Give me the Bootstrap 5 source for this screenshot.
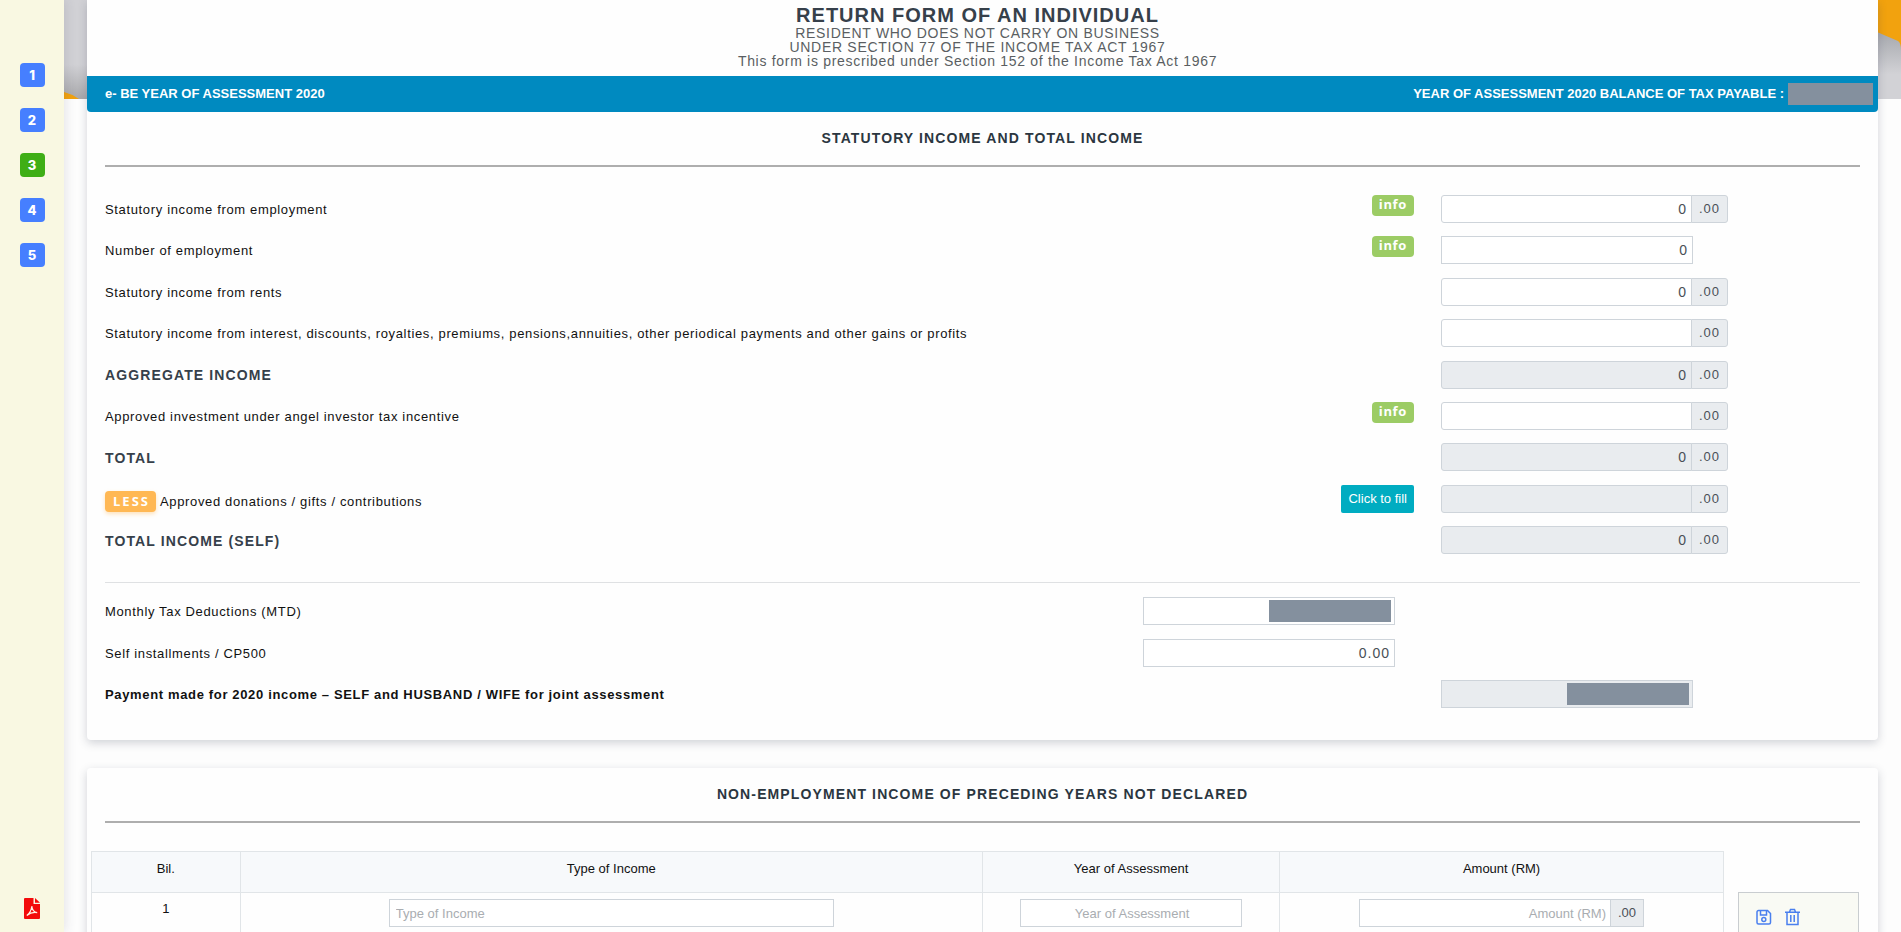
<!DOCTYPE html>
<html lang="en">
<head>
<meta charset="utf-8">
<meta name="viewport" content="width=device-width, initial-scale=1">
<title>e-BE Year of Assessment 2020</title>
<link href="https://cdn.jsdelivr.net/npm/bootstrap@5.3.0/dist/css/bootstrap.min.css" rel="stylesheet">
<style>
  body { font-family: "Liberation Sans", Arial, sans-serif; font-size: 13px; line-height: 20px; color: #111; background: #fdfdfd; }
  .side-rail { width: 64px; background: #f9f8e2; padding: 63px 0 9px; box-shadow: 2px 0 10px rgba(60,60,80,.12); z-index: 2; }
  .step-links { gap: 21px; }
  .step-link { width: 25px; height: 24px; border-radius: 4px; background: #467fff; color: #fff; font: 800 13px/24px Inter, sans-serif; text-align: center; text-decoration: none; }
  .step-link.current { background: #3fae15; }
  .backdrop { inset: 0 0 auto 0; height: 99px; z-index: 0; }
  .page-area { padding: 0 23px; }
  .form-sheet { background: #fefefe; border: 0; border-radius: 4px; box-shadow: 0 3px 10px rgba(50,60,80,.22); z-index: 1; }
  .sheet-top { border-radius: 0 0 4px 4px; margin-bottom: 28px; padding-bottom: 32px; }
  .form-head { padding: 5px 10px 8px 0; font-size: 14px; line-height: 14px; letter-spacing: .05em; color: #5a5e62; }
  .form-head h1 { font-size: 20px; line-height: 21px; letter-spacing: 1px; font-weight: 700; color: #36404a; margin: 0; }
  .form-head p { margin: 0; }
  .year-bar { background: #008ac0; color: #fff; font-weight: 700; height: 36px; padding: 0 5px 0 18px; border-radius: 0 0 4px 4px; }
  .masked { display: block; background: #84909e; }
  .year-bar .masked { width: 85px; height: 22px; margin-left: 4px; }
  .sheet-body { padding: 16px 18px 0; }
  .section-title { font-size: 14px; line-height: 20px; font-weight: 700; letter-spacing: .08em; text-align: center; color: #2b3640; margin: 0 0 17px; }
  .section-rule { height: 2px; background: #aeaeae; opacity: 1; border: 0; margin: 0; }
  .light-rule { height: 1px; background: #dfe1e3; opacity: 1; border: 0; margin: 28px 0 14px; }
  .field-list { display: grid; align-content: space-between; letter-spacing: .05em; }
  .income-list { min-height: 359px; margin-top: 28px; }
  .payment-list { min-height: 111px; }
  .field-row { display: grid; grid-template-columns: minmax(0,1fr) 271px 287px 105px; column-gap: 27px; align-items: center; min-height: 28px; }
  .field-row label { padding-top: 2px; }
  .field-row > .helper { align-self: start; display: flex; justify-content: flex-end; }
  .field-row strong.caps { font-size: 14px; letter-spacing: .08em; color: #36404a; }
  .info-btn { font: 700 13px/19px "Open Sans", sans-serif; letter-spacing: .05em; background: #9ccc65; color: #fff; border: 0; border-radius: 4px; padding: 0 7px 2px; height: 21px; }
  .fill-btn { font-size: 13px; line-height: 20px; padding: 4px 7px; border: 0; border-radius: 2px; background: #00acc1; color: #fff; }
  .field-row label.tagged { padding-top: 5px; }
  .less-tag { display: inline-block; font: 700 13px/20px "Open Sans", sans-serif; letter-spacing: 2px; background: #ffb854; color: #fff; border-radius: 4px; padding: 0 6px 1px 8px; margin-right: 4px; box-shadow: 0 2px 4px rgba(255,184,84,.4); }
  .amount { width: 252px; }
  .amount .form-control, .form-control.plain { height: 28px; min-height: 28px; font-size: 14px; line-height: 20px; padding: 3px 4px 3px 6px; border: 1px solid #ced4da; border-radius: 0; color: #495057; letter-spacing: 1px; background: #fff; }
  .amount.with-cents { width: 287px; }
  .amount.with-cents .form-control { border-radius: 3px 0 0 3px; }
  .amount .form-control[readonly] { background: #e9ecef; }
  .cents { width: 37px; justify-content: center; font-size: 13px; line-height: 20px; padding: 3px 0; border-color: #ced4da; border-radius: 0 3px 3px 0; background: #e9ecef; color: #495057; letter-spacing: 1px; }
  .amount > .masked { position: absolute; right: 4px; top: 3px; width: 122px; height: 22px; z-index: 6; }
  .income-table-wrap { margin-top: 28px; padding: 0 19px 0 4px; gap: 14px; }
  .income-table { margin: 0; flex: 1 1 0; border-color: #e1e5e8; table-layout: fixed; text-align: center; font-size: 13px; }
  .income-table th { font-weight: 400; background: #f7f9fb; color: #111; height: 41px; padding: 6px 0 13px; }
  .income-table td { padding: 6px 0 9px; height: 62px; background: #fefefe; color: #111; }
  .form-control.plain, .income-table .amount .form-control { letter-spacing: 0; font-size: 13px; border-radius: 0; }
  .form-control.plain::placeholder, .income-table .form-control::placeholder { color: #a9adb1; }
  .income-table .type-box { width: 60%; }
  .income-table .amount { width: 285px; }
  .income-table .cents { width: 34px; font-size: 13px; letter-spacing: 0; border-radius: 0; }
  .row-tools { width: 121px; margin-top: 41px; border: 1px solid #c9cdd0; background: #f9faf4; padding: 15px 16px; gap: 12px; }
  .tool-btn { border: 0; background: none; padding: 0; width: 17px; height: 18px; line-height: 0; }
  @media (max-width: 1100px) {
    .field-row { grid-template-columns: minmax(0,1fr) 252px 287px 0; column-gap: 10px; }
  }
</style>
</head>
<body>
<div class="d-flex vh-100 overflow-hidden">
  <nav class="side-rail d-flex flex-column align-items-center justify-content-between flex-shrink-0 position-relative" aria-label="Form steps">
    <div class="step-links d-flex flex-column">
      <a class="step-link" href="#step1">1</a>
      <a class="step-link" href="#step2">2</a>
      <a class="step-link current" href="#step3" aria-current="step">3</a>
      <a class="step-link" href="#step4">4</a>
      <a class="step-link" href="#step5">5</a>
    </div>
    <a href="#pdf" class="lh-1 pb-1" aria-label="Open PDF">
      <svg width="16" height="21" viewBox="0 0 16 21"><path d="M1 0h8.500v6H16v14a1 1 0 0 1-1 1H1a1 1 0 0 1-1-1V1a1 1 0 0 1 1-1z" fill="#f30b0b"/><path d="M11 0l5 4.800h-5z" fill="#f30b0b"/><path d="M2.800 17.500c2.200-1.600 4.600-5.600 5-9.500.3 3.600 2.300 6.300 5.400 6.600-3.500-.6-7.200.3-10.400 2.900z" fill="none" stroke="#fff3e8" stroke-width="1.200"/></svg>
    </a>
  </nav>

  <main class="flex-grow-1 position-relative page-area">
    <div class="backdrop position-absolute d-flex justify-content-between" aria-hidden="true">
      <svg width="24" height="99" viewBox="0 0 24 99"><defs><linearGradient id="gl" x1="0" y1="0" x2="0" y2="1"><stop offset=".65" stop-color="#d1d1d5"/><stop offset="1" stop-color="#a8a8ab"/></linearGradient></defs><path fill="url(#gl)" d="M0 0h24v99H0z"/><path fill="#f2a20e" d="M0 92q8 2 15 7H0z"/></svg>
      <svg width="24" height="99" viewBox="0 0 24 99"><defs><linearGradient id="gr" x1="0" y1="0" x2="0" y2="1"><stop offset=".35" stop-color="#a9abb0"/><stop offset=".75" stop-color="#d2d2d6"/></linearGradient></defs><path fill="url(#gr)" d="M0 0h24v99H0z"/><path fill="#f2a20e" d="M0 0h24v50q0-7-3-9L0 32z"/></svg>
    </div>

    <section class="form-sheet sheet-top position-relative">
      <header class="form-head text-center">
        <h1>RETURN FORM OF AN INDIVIDUAL</h1>
        <p>RESIDENT WHO DOES NOT CARRY ON BUSINESS</p>
        <p>UNDER SECTION 77 OF THE INCOME TAX ACT 1967</p>
        <p>This form is prescribed under Section 152 of the Income Tax Act 1967</p>
      </header>
      <div class="year-bar d-flex align-items-center">
        <span class="me-auto">e- BE YEAR OF ASSESSMENT 2020</span>
        <span>YEAR OF ASSESSMENT 2020 BALANCE OF TAX PAYABLE :</span>
        <span class="masked"></span>
      </div>
      <div class="sheet-body">
        <h2 class="section-title">STATUTORY INCOME AND TOTAL INCOME</h2>
        <hr class="section-rule">
        <form class="field-list income-list">
          <div class="field-row">
            <label for="f1">Statutory income from employment</label>
            <div class="helper"><button type="button" class="info-btn">info</button></div>
            <div class="input-group amount with-cents"><input id="f1" class="form-control text-end" value="0"><span class="input-group-text cents">.00</span></div>
          </div>
          <div class="field-row">
            <label for="f2">Number of employment</label>
            <div class="helper"><button type="button" class="info-btn">info</button></div>
            <div class="amount"><input id="f2" class="form-control text-end" value="0"></div>
          </div>
          <div class="field-row">
            <label for="f3">Statutory income from rents</label>
            <div class="helper"></div>
            <div class="input-group amount with-cents"><input id="f3" class="form-control text-end" value="0"><span class="input-group-text cents">.00</span></div>
          </div>
          <div class="field-row">
            <label for="f4">Statutory income from interest, discounts, royalties, premiums, pensions,annuities, other periodical payments and other gains or profits</label>
            <div class="helper"></div>
            <div class="input-group amount with-cents"><input id="f4" class="form-control text-end"><span class="input-group-text cents">.00</span></div>
          </div>
          <div class="field-row">
            <label for="f5"><strong class="caps">AGGREGATE INCOME</strong></label>
            <div class="helper"></div>
            <div class="input-group amount with-cents"><input id="f5" class="form-control text-end" value="0" readonly><span class="input-group-text cents">.00</span></div>
          </div>
          <div class="field-row">
            <label for="f6">Approved investment under angel investor tax incentive</label>
            <div class="helper"><button type="button" class="info-btn">info</button></div>
            <div class="input-group amount with-cents"><input id="f6" class="form-control text-end"><span class="input-group-text cents">.00</span></div>
          </div>
          <div class="field-row">
            <label for="f7"><strong class="caps">TOTAL</strong></label>
            <div class="helper"></div>
            <div class="input-group amount with-cents"><input id="f7" class="form-control text-end" value="0" readonly><span class="input-group-text cents">.00</span></div>
          </div>
          <div class="field-row">
            <label for="f8" class="tagged"><span class="less-tag">LESS</span>Approved donations / gifts / contributions</label>
            <div class="helper"><button type="button" class="fill-btn">Click to fill</button></div>
            <div class="input-group amount with-cents"><input id="f8" class="form-control text-end" readonly><span class="input-group-text cents">.00</span></div>
          </div>
          <div class="field-row">
            <label for="f9"><strong class="caps">TOTAL INCOME (SELF)</strong></label>
            <div class="helper"></div>
            <div class="input-group amount with-cents"><input id="f9" class="form-control text-end" value="0" readonly><span class="input-group-text cents">.00</span></div>
          </div>
        </form>
        <hr class="light-rule">
        <form class="field-list payment-list">
          <div class="field-row">
            <label for="p1">Monthly Tax Deductions (MTD)</label>
            <div class="amount position-relative"><input id="p1" class="form-control text-end"><span class="masked"></span></div>
          </div>
          <div class="field-row">
            <label for="p2">Self installments / CP500</label>
            <div class="amount"><input id="p2" class="form-control text-end" value="0.00"></div>
          </div>
          <div class="field-row">
            <label for="p3"><strong>Payment made for 2020 income – SELF and HUSBAND / WIFE for joint assessment</strong></label>
            <div></div>
            <div class="amount position-relative"><input id="p3" class="form-control text-end" readonly><span class="masked"></span></div>
          </div>
        </form>
      </div>
    </section>

    <section class="form-sheet position-relative">
      <div class="sheet-body">
        <h2 class="section-title">NON-EMPLOYMENT INCOME OF PRECEDING YEARS NOT DECLARED</h2>
        <hr class="section-rule">
      </div>
      <div class="income-table-wrap d-flex">
        <table class="table table-bordered income-table">
          <colgroup><col style="width:9.1%"><col style="width:45.500%"><col style="width:18.200%"><col style="width:27.200%"></colgroup>
          <thead><tr><th scope="col">Bil.</th><th scope="col">Type of Income</th><th scope="col">Year of Assessment</th><th scope="col">Amount (RM)</th></tr></thead>
          <tbody><tr>
            <td>1</td>
            <td><input class="form-control plain mx-auto type-box" placeholder="Type of Income" aria-label="Type of Income"></td>
            <td><input class="form-control plain mx-auto w-75 text-center" placeholder="Year of Assessment" aria-label="Year of Assessment"></td>
            <td><div class="input-group amount with-cents mx-auto"><input class="form-control text-end" placeholder="Amount (RM)" aria-label="Amount (RM)"><span class="input-group-text cents">.00</span></div></td>
          </tr></tbody>
        </table>
        <div class="row-tools d-flex align-items-start">
          <button type="button" class="tool-btn" aria-label="Save row"><svg width="16" height="18" viewBox="0 0 16 18" fill="none" stroke="#4a7fee" stroke-width="1.500"><path d="M2.500 2.500h9l3 3v9a1.500 1.500 0 0 1-1.500 1.500H2.500A1.500 1.500 0 0 1 1 14.500V4a1.500 1.500 0 0 1 1.500-1.500z"/><path d="M4.500 3v4h6V3"/><circle cx="7.800" cy="11.500" r="2"/></svg></button>
          <button type="button" class="tool-btn" aria-label="Delete row"><svg width="17" height="18" viewBox="0 0 17 18" fill="none" stroke="#4a7fee" stroke-width="1.500"><path d="M1 4.200h15M5.500 4l1-2.500h4l1 2.500M3 4.500V16.500h11V4.500M6.800 7v7M10.200 7v7"/></svg></button>
        </div>
      </div>
    </section>
  </main>
</div>
<script src="https://cdn.jsdelivr.net/npm/bootstrap@5.3.0/dist/js/bootstrap.bundle.min.js"></script>
</body>
</html>
